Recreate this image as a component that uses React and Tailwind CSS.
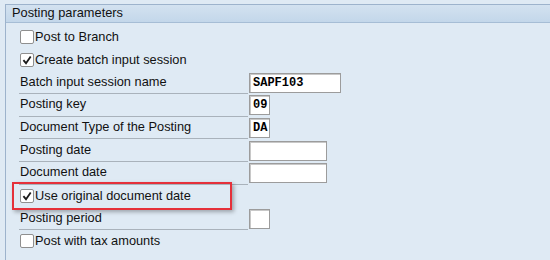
import React from "react";

const font = { fontFamily: "'Liberation Sans', Arial, sans-serif" };

function Check({ checked }) {
  return (
    <div className="w-[14px] h-[14px] rounded-[2px] border border-[#8f8f8f] bg-white flex items-center justify-center shrink-0">
      {checked && (
        <svg width="10" height="10" viewBox="0 0 10 10">
          <path d="M1.4 5.2 L4 8.2 L8.7 1.5" fill="none" stroke="#1a1a1a" strokeWidth="1.8" />
        </svg>
      )}
    </div>
  );
}

function CheckRow({ label, checked }) {
  return (
    <div className="h-[22.67px] flex items-center gap-[1px]">
      <Check checked={checked} />
      <span className="text-[12.8px] text-[#111] leading-none">{label}</span>
    </div>
  );
}

function FieldRow({ label, value, w }) {
  return (
    <div className="h-[22.67px] flex items-center">
      <div className="w-[229px] h-full flex items-center border-b border-[#a9b2bb] pl-[1px] -ml-[1px]">
        <span className="text-[12.8px] text-[#111] leading-none">{label}</span>
      </div>
      {w ? (
        <div
          className={`ml-[1px] h-[20px] bg-white border border-[#9c9c9c] shadow-[inset_1px_1px_0_#c8c8c8] flex items-center pl-[3px] ${w}`}
        >
          <span className="text-[12px] font-bold leading-none text-black" style={{ fontFamily: "'Liberation Mono', 'DejaVu Sans Mono', monospace" }}>
            {value}
          </span>
        </div>
      ) : null}
    </div>
  );
}

export default function App() {
  return (
    <div className="relative w-[550px] h-[260px] bg-[#dfeaf4] pt-[4px] pl-[5px] overflow-hidden" style={font}>
      <div className="border-t border-l border-[#9db3cc] h-full">
        <div className="h-[18px] bg-gradient-to-b from-[#d3e2f0] to-[#c3d7ea] border-b border-[#a6bdd5] flex items-center pl-[6px]">
          <span className="text-[12.8px] text-[#111] leading-none">Posting parameters</span>
        </div>
        <div className="pl-[14px] pt-[3px]">
          <CheckRow label="Post to Branch" />
          <CheckRow label="Create batch input session" checked />
          <FieldRow label="Batch input session name" value="SAPF103" w="w-[92px]" />
          <FieldRow label="Posting key" value="09" w="w-[21px]" />
          <FieldRow label="Document Type of the Posting" value="DA" w="w-[21px]" />
          <FieldRow label="Posting date" value="" w="w-[78px]" />
          <FieldRow label="Document date" value="" w="w-[78px]" />
          <CheckRow label="Use original document date" checked />
          <FieldRow label="Posting period" value="" w="w-[21px]" />
          <CheckRow label="Post with tax amounts" />
        </div>
      </div>
      <div className="absolute left-[12px] top-[182px] w-[220px] h-[28px] border-2 border-[#e5303a] shadow-[2px_2px_4px_rgba(0,0,0,0.3)]" />
    </div>
  );
}
